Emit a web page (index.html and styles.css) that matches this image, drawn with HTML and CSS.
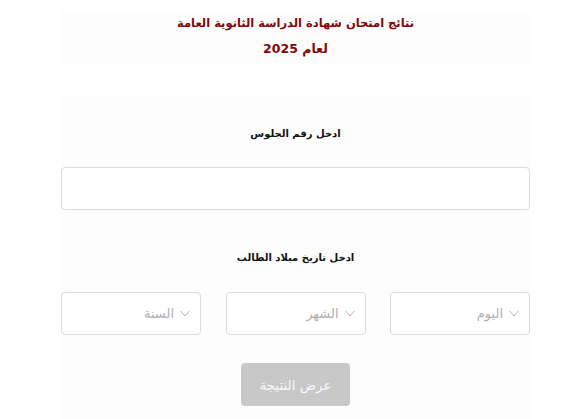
FILE: index.html
```html
<!DOCTYPE html>
<html lang="ar" dir="rtl">
<head>
<meta charset="utf-8">
<title>نتائج امتحان شهادة الدراسة الثانوية العامة</title>
<link rel="stylesheet" href="styles.css">
</head>
<body>
<div class="page">
  <header class="head">
    <div class="head-line">نتائج امتحان شهادة الدراسة الثانوية العامة</div>
    <div class="head-line head-year">لعام 2025</div>
  </header>
  <form class="card">
    <label class="label">ادخل رقم الجلوس</label>
    <input class="field" type="text">
    <label class="label label-date">ادخل تاريخ ميلاد الطالب</label>
    <div class="selects">
      <div class="select"><svg class="chev" width="10" height="7" viewBox="0 0 10 7"><polyline points="0.5,0.8 5,6 9.5,0.8" fill="none" stroke="#b4b4b4" stroke-width="1"/></svg><span class="ph">اليوم</span></div>
      <div class="select"><svg class="chev" width="10" height="7" viewBox="0 0 10 7"><polyline points="0.5,0.8 5,6 9.5,0.8" fill="none" stroke="#b4b4b4" stroke-width="1"/></svg><span class="ph">الشهر</span></div>
      <div class="select"><svg class="chev" width="10" height="7" viewBox="0 0 10 7"><polyline points="0.5,0.8 5,6 9.5,0.8" fill="none" stroke="#b4b4b4" stroke-width="1"/></svg><span class="ph">السنة</span></div>
    </div>
    <button class="btn" type="button">عرض النتيجة</button>
  </form>
</div>
</body>
</html>
```
FILE: styles.css
```css
* { box-sizing: border-box; }
html, body { margin: 0; padding: 0; background: #ffffff; }
body { font-family: "DejaVu Sans", "Liberation Sans", sans-serif; overflow: hidden; }
.page {
  padding: 10px 41px 0 61px;
  display: flex;
  flex-direction: column;
  gap: 34px;
}
.head {
  background: #fdfdfd;
  height: 53px;
  text-align: center;
  color: #800808;
  font-weight: bold;
  font-size: 11.5px;
}
.head-line { line-height: 26px; }
.head-year { font-size: 12.5px; }
.card {
  background: #fdfdfd;
  display: flex;
  flex-direction: column;
  align-items: center;
  padding: 28px 0 20px;
  margin: 0;
}
.label {
  font-size: 10px;
  font-weight: bold;
  color: #111;
  line-height: 18px;
}
.field {
  margin-top: 24px;
  width: 100%;
  height: 43px;
  border: 1px solid #dcdcdc;
  border-radius: 4px;
  background: #fff;
}
.label-date { margin-top: 39px; }
.selects {
  margin-top: 25px;
  width: 100%;
  display: flex;
  justify-content: space-between;
}
.select {
  width: 140px;
  height: 43px;
  border: 1px solid #dcdcdc;
  border-radius: 4px;
  background: #fff;
  display: flex;
  align-items: center;
  gap: 6px;
  padding-right: 10px;
  color: #b0b0b0;
  font-size: 13px;
}
.chev { display: block; }
.btn {
  margin-top: 28px;
  width: 109px;
  height: 43px;
  border: none;
  border-radius: 4px;
  background: #c8c8c8;
  color: #f6f8fb;
  font-family: "DejaVu Sans", sans-serif;
  font-size: 13.5px;
}
```
